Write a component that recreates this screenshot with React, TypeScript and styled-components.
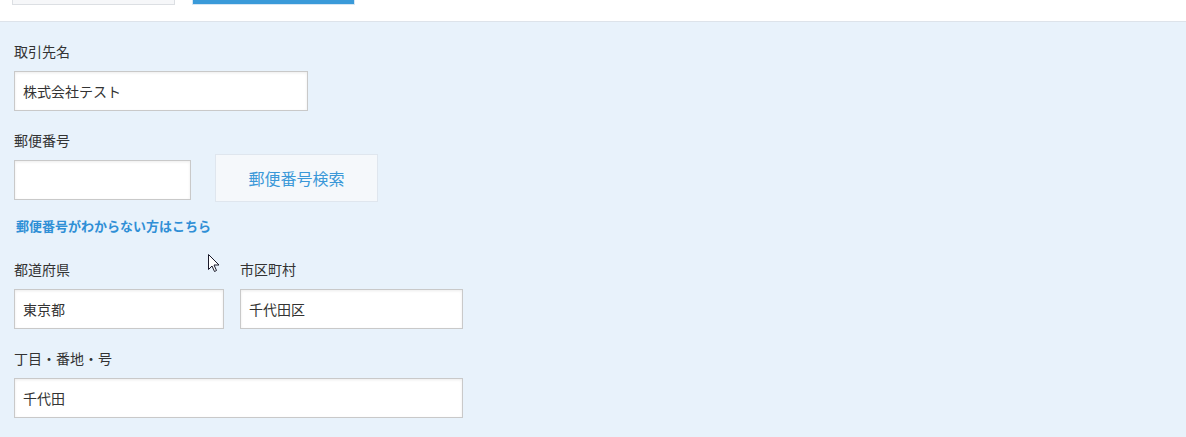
import styled, { createGlobalStyle } from 'styled-components';

const Global = createGlobalStyle`
  html, body {
    margin: 0;
    padding: 0;
    background: #e8f2fb;
    font-family: "Noto Sans CJK JP", "Noto Sans", sans-serif;
    color: #333;
  }
`;

const Page = styled.div`
  position: relative;
  width: 1186px;
  height: 437px;
  overflow: hidden;
  background: #e8f2fb;
`;

const Header = styled.div`
  height: 21px;
  background: #fff;
  border-bottom: 1px solid #dde3ea;
  display: flex;
  align-items: flex-start;
  padding-left: 12px;
  gap: 17px;
`;

const Tab = styled.div<{ $active?: boolean }>`
  width: 161px;
  height: 4px;
  background: ${(p) => (p.$active ? '#3a9ad9' : '#f6f7f9')};
  border: 1px solid ${(p) => (p.$active ? '#d6e6f4' : '#dcdfe3')};
  border-top: none;
`;

const Form = styled.div`
  padding: 20px 0 0 14px;
`;

const Label = styled.div`
  font-size: 14px;
  line-height: 18px;
  height: 18px;
  margin-bottom: 11px;
  white-space: nowrap;
`;

const Input = styled.input<{ $w: number }>`
  box-sizing: border-box;
  display: block;
  width: ${(p) => p.$w}px;
  height: 40px;
  margin: 0;
  padding: 0 8px;
  border: 1px solid #c9c9c9;
  border-radius: 0;
  background: #fff;
  box-shadow: inset 0 1px 3px rgba(0, 0, 0, 0.08);
  font-family: inherit;
  font-size: 14px;
  color: #333;
  outline: none;
`;

const Field = styled.div<{ $top?: number }>`
  margin-top: ${(p) => p.$top ?? 0}px;
`;

const Row = styled.div<{ $gap: number; $top?: number }>`
  display: flex;
  align-items: flex-start;
  gap: ${(p) => p.$gap}px;
  margin-top: ${(p) => p.$top ?? 0}px;
`;

const SearchButton = styled.button`
  box-sizing: border-box;
  width: 163px;
  height: 48px;
  margin-top: -6px;
  border: 1px solid #dfe6ee;
  border-radius: 0;
  background: #f5f8fb;
  color: #3b98d8;
  font-family: inherit;
  font-size: 16px;
  cursor: pointer;
`;

const HelpLink = styled.a`
  display: block;
  margin-top: 16px;
  padding-left: 2px;
  font-size: 13px;
  line-height: 16px;
  height: 16px;
  font-weight: bold;
  color: #2f8fd6;
  text-decoration: none;
`;

const Cursor = styled.svg`
  position: absolute;
  left: 208px;
  top: 254px;
`;

export default function App() {
  return (
    <Page>
      <Global />
      <Header>
        <Tab />
        <Tab $active />
      </Header>
      <Form>
        <Field>
          <Label>取引先名</Label>
          <Input $w={294} defaultValue="株式会社テスト" />
        </Field>

        <Field $top={20}>
          <Label>郵便番号</Label>
          <Row $gap={24}>
            <Input $w={177} />
            <SearchButton>郵便番号検索</SearchButton>
          </Row>
        </Field>
        <HelpLink href="#">郵便番号がわからない方はこちら</HelpLink>

        <Row $gap={16} $top={26}>
          <Field>
            <Label>都道府県</Label>
            <Input $w={210} defaultValue="東京都" />
          </Field>
          <Field>
            <Label>市区町村</Label>
            <Input $w={223} defaultValue="千代田区" />
          </Field>
        </Row>

        <Field $top={20}>
          <Label>丁目・番地・号</Label>
          <Input $w={449} defaultValue="千代田" />
        </Field>
      </Form>
      <Cursor width="12" height="19" viewBox="0 0 12 19">
        <path d="M0.5 0.5 L0.5 15.5 L4 12 L6.5 17.5 L8.5 16.5 L6 11 L11 11 Z" fill="#fff" stroke="#1a1a2a" strokeWidth="1" />
      </Cursor>
    </Page>
  );
}
